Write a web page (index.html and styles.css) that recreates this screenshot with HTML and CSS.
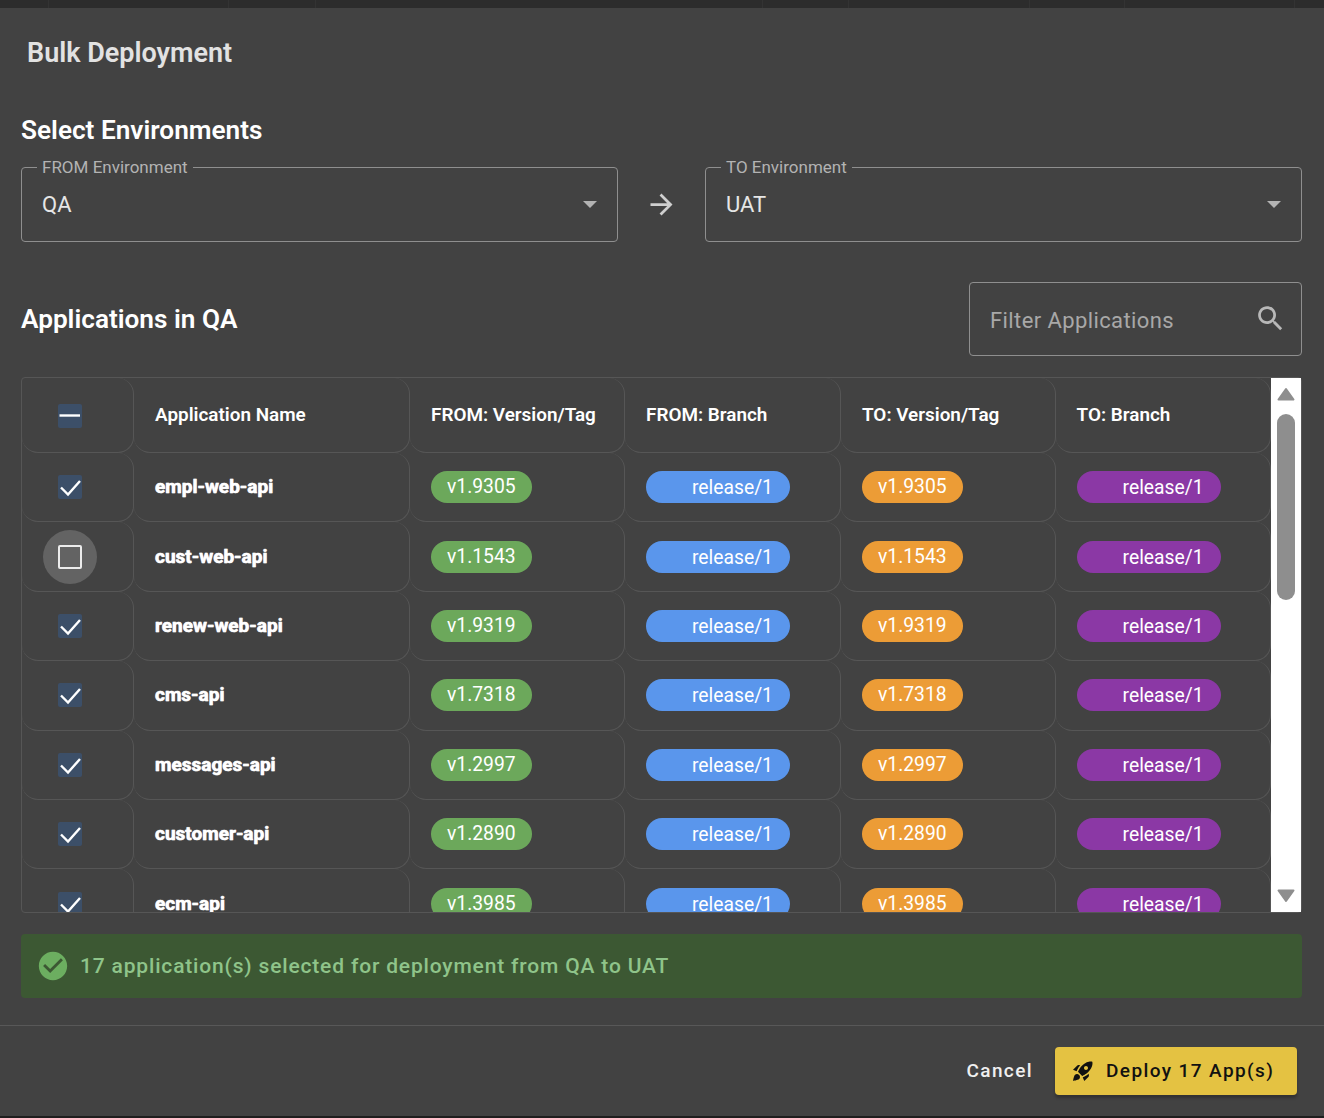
FILE: index.html
```html
<!DOCTYPE html>
<html lang="en">
<head>
  <meta charset="UTF-8">
  <meta name="viewport" content="width=device-width, initial-scale=1.0">
  <title>Bulk Deployment</title>
  <link rel="stylesheet" href="styles.css">
</head>
<body>

  <div class="backdrop-top"></div>

  <div class="dialog">
    <h2 class="dialog-title">Bulk Deployment</h2>

    <div class="dialog-body">
      <h3 class="section-title">Select Environments</h3>

      <div class="env-row">
        <div class="field">
          <span class="field-label">FROM Environment</span>
          <span class="field-value">QA</span>
          <span class="caret"></span>
        </div>
        <svg class="env-arrow" viewBox="0 0 24 24"><path d="M12 4l-1.41 1.41L16.17 11H4v2h12.17l-5.58 5.59L12 20l8-8z"/></svg>
        <div class="field">
          <span class="field-label">TO Environment</span>
          <span class="field-value">UAT</span>
          <span class="caret"></span>
        </div>
      </div>

      <div class="apps-head">
        <h3 class="section-title">Applications in QA</h3>
        <div class="filter">
          <span class="filter-text">Filter Applications</span>
          <svg class="filter-icon" viewBox="0 0 24 24"><path d="M15.5 14h-.79l-.28-.27C15.41 12.59 16 11.11 16 9.5 16 5.91 13.09 3 9.5 3S3 5.91 3 9.5 5.91 16 9.5 16c1.61 0 3.09-.59 4.23-1.57l.27.28v.79l5 4.99L20.49 19l-4.99-5zm-6 0C7.01 14 5 11.99 5 9.5S7.01 5 9.5 5 14 7.01 14 9.5 11.99 14 9.5 14z"/></svg>
        </div>
      </div>

      <div class="table-box">
        <div class="table-scroll">
          <table class="apps">
            <colgroup>
              <col class="col-check"><col class="col-name"><col class="col-a"><col class="col-b"><col class="col-c"><col class="col-d">
            </colgroup>
            <thead>
              <tr>
                <th class="check"><span class="box on"><svg viewBox="0 0 24 24"><path d="M1.5 11.5H22"/></svg></span></th>
                <th>Application Name</th>
                <th>FROM: Version/Tag</th>
                <th>FROM: Branch</th>
                <th>TO: Version/Tag</th>
                <th>TO: Branch</th>
              </tr>
            </thead>
            <tbody>
              <tr>
                <td class="check"><span class="box on"><svg viewBox="0 0 24 24"><path d="M3 12.5l7 7L22 6"/></svg></span></td>
                <td class="name">empl-web-api</td>
                <td><span class="chip green">v1.9305</span></td>
                <td><span class="chip branch blue">release/1</span></td>
                <td><span class="chip orange">v1.9305</span></td>
                <td><span class="chip branch purple">release/1</span></td>
              </tr>
              <tr>
                <td class="check"><span class="hover-ring"><span class="box"></span></span></td>
                <td class="name">cust-web-api</td>
                <td><span class="chip green">v1.1543</span></td>
                <td><span class="chip branch blue">release/1</span></td>
                <td><span class="chip orange">v1.1543</span></td>
                <td><span class="chip branch purple">release/1</span></td>
              </tr>
              <tr>
                <td class="check"><span class="box on"><svg viewBox="0 0 24 24"><path d="M3 12.5l7 7L22 6"/></svg></span></td>
                <td class="name">renew-web-api</td>
                <td><span class="chip green">v1.9319</span></td>
                <td><span class="chip branch blue">release/1</span></td>
                <td><span class="chip orange">v1.9319</span></td>
                <td><span class="chip branch purple">release/1</span></td>
              </tr>
              <tr>
                <td class="check"><span class="box on"><svg viewBox="0 0 24 24"><path d="M3 12.5l7 7L22 6"/></svg></span></td>
                <td class="name">cms-api</td>
                <td><span class="chip green">v1.7318</span></td>
                <td><span class="chip branch blue">release/1</span></td>
                <td><span class="chip orange">v1.7318</span></td>
                <td><span class="chip branch purple">release/1</span></td>
              </tr>
              <tr>
                <td class="check"><span class="box on"><svg viewBox="0 0 24 24"><path d="M3 12.5l7 7L22 6"/></svg></span></td>
                <td class="name">messages-api</td>
                <td><span class="chip green">v1.2997</span></td>
                <td><span class="chip branch blue">release/1</span></td>
                <td><span class="chip orange">v1.2997</span></td>
                <td><span class="chip branch purple">release/1</span></td>
              </tr>
              <tr>
                <td class="check"><span class="box on"><svg viewBox="0 0 24 24"><path d="M3 12.5l7 7L22 6"/></svg></span></td>
                <td class="name">customer-api</td>
                <td><span class="chip green">v1.2890</span></td>
                <td><span class="chip branch blue">release/1</span></td>
                <td><span class="chip orange">v1.2890</span></td>
                <td><span class="chip branch purple">release/1</span></td>
              </tr>
              <tr>
                <td class="check"><span class="box on"><svg viewBox="0 0 24 24"><path d="M3 12.5l7 7L22 6"/></svg></span></td>
                <td class="name">ecm-api</td>
                <td><span class="chip green">v1.3985</span></td>
                <td><span class="chip branch blue">release/1</span></td>
                <td><span class="chip orange">v1.3985</span></td>
                <td><span class="chip branch purple">release/1</span></td>
              </tr>
            </tbody>
          </table>
        </div>
        <div class="scrollbar">
          <svg class="sb-arrow" viewBox="0 0 18 14"><path d="M9 2L16.5 12.5H1.5z"/></svg>
          <span class="sb-thumb"></span>
          <svg class="sb-arrow down" viewBox="0 0 18 14"><path d="M1.5 1.5H16.5L9 12z"/></svg>
        </div>
      </div>

      <div class="alert">
        <svg class="alert-icon" viewBox="0 0 24 24"><path d="M12 2C6.48 2 2 6.48 2 12s4.48 10 10 10 10-4.48 10-10S17.52 2 12 2zm-2 15l-5-5 1.41-1.41L10 14.17l7.59-7.59L19 8l-9 9z"/></svg>
        <span>17 application(s) selected for deployment from QA to UAT</span>
      </div>
    </div>

    <div class="dialog-actions">
      <button class="btn-cancel" type="button">Cancel</button>
      <button class="btn-deploy" type="button">
        <svg viewBox="0 0 24 24"><path d="M9.19 6.35c-2.04 2.29-3.44 5.58-3.57 5.89L2 10.69l4.05-4.05c.47-.47 1.15-.68 1.81-.55l1.33.26zM11.17 17s3.74-1.55 5.89-3.7c5.4-5.4 4.5-9.62 4.21-10.57-.95-.3-5.17-1.19-10.57 4.21C8.55 9.09 7 12.83 7 12.83L11.17 17zm6.48-2.19c-2.29 2.04-5.58 3.44-5.89 3.57L13.31 22l4.05-4.05c.47-.47.68-1.15.55-1.81l-.26-1.33zM9 18c0 .83-.34 1.58-.88 2.12C6.94 21.3 2 22 2 22s.7-4.94 1.88-6.12C4.42 15.34 5.17 15 6 15c1.66 0 3 1.34 3 3zm4-9c0-1.1.9-2 2-2s2 .9 2 2-.9 2-2 2-2-.9-2-2z"/></svg>
        <span>Deploy 17 App(s)</span>
      </button>
    </div>
  </div>

  <div class="backdrop-bottom">
    <span class="date-a">2025 8:00 PM</span>
    <span class="date-b">8-18-2025 8:00 PM</span>
    <span class="date-b">8-18-2025 8:00 PM</span>
    <span class="date-b">8-18-2025 8:00 PM</span>
  </div>

</body>
</html>
```

FILE: styles.css
```css
* {
  box-sizing: border-box;
}
html, body {
  margin: 0;
  height: 1118px;
  overflow: hidden;
}
body {
  background-color: #1e1e1e;
  font-family: Roboto, "Liberation Sans", sans-serif;
  display: flex;
  flex-direction: column;
}
.backdrop-top {
  height: 8px;
  flex: none;
  background-color: #2c2c2c;
  /* column lines of the page behind the dialog */
  background-image:
    linear-gradient(#333, #333), linear-gradient(#333, #333),
    linear-gradient(#333, #333), linear-gradient(#333, #333),
    linear-gradient(#333, #333), linear-gradient(#333, #333),
    linear-gradient(#333, #333), linear-gradient(#333, #333);
  background-size: 1px 100%;
  background-repeat: no-repeat;
  background-position: 48px 0, 228px 0, 315px 0, 762px 0, 848px 0, 1029px 0, 1124px 0, 1294px 0;
}
.backdrop-bottom {
  height: 2px;
  flex: none;
  overflow: hidden;
  display: flex;
  padding-left: 8px;
  background-color: #1e1e1e;
  color: #9a9a9a;
  font-size: 17px;
  line-height: 18px;
}
.date-a { width: 222px; }
.date-b { width: 267px; }
.dialog {
  height: 1108px;
  flex: none;
  background-color: #424242;
  color: #fff;
  display: flex;
  flex-direction: column;
}
.dialog-title {
  margin: 0;
  padding: 28px 27px 0;
  height: 104px;
  font-size: 27px;
  line-height: 35px;
  font-weight: 600;
  color: #e2e2e2;
}
.dialog-body {
  flex: 1;
  padding: 0 22px 0 21px;
  border-bottom: 1px solid #585858;
}
.section-title {
  margin: 0;
  font-size: 26.2px;
  line-height: 36px;
  font-weight: 600;
}
.env-row {
  display: flex;
  align-items: center;
  margin-top: 19px;
}
.field {
  position: relative;
  flex: 1;
  height: 75px;
  border: 1px solid #8f8f8f;
  border-radius: 4px;
  padding: 0 20px 1px;
  display: flex;
  align-items: center;
}
.field-label {
  position: absolute;
  top: -11px;
  left: 15px;
  padding: 0 5px;
  background-color: #424242;
  color: #b3b3b3;
  font-size: 17px;
  line-height: 20px;
}
.field-value {
  font-size: 22px;
  color: #e6e6e6;
}
.caret {
  margin-left: auto;
  border-left: 7px solid transparent;
  border-right: 7px solid transparent;
  border-top: 7px solid #b3b3b3;
}
.env-arrow {
  width: 33px;
  height: 33px;
  flex: none;
  margin: 0 27px;
  fill: #cfcfcf;
}
.apps-head {
  display: flex;
  align-items: center;
  justify-content: space-between;
  margin-top: 40px;
}
.filter {
  width: 333px;
  height: 74px;
  border: 1px solid #8f8f8f;
  border-radius: 4px;
  padding: 0 14px 0 20px;
  display: flex;
  align-items: center;
  justify-content: space-between;
}
.filter-text {
  padding-top: 2px;
  font-size: 22px;
  letter-spacing: 0.4px;
  color: #a8a8a8;
}
.filter-icon {
  width: 33px;
  height: 33px;
  margin-top: -1px;
  fill: #b8b8b8;
}
.table-box {
  display: flex;
  height: 536px;
  margin-top: 21px;
  border: 1px solid #565656;
  border-radius: 4px;
}
.table-scroll {
  flex: 1;
  overflow: hidden;
}
.apps {
  width: 1249px;
  table-layout: fixed;
  border-collapse: separate;
  border-spacing: 0;
}
.col-check { width: 112px; }
.col-name { width: 276px; }
.col-a { width: 215px; }
.col-b { width: 216px; }
.col-c { width: 214.6px; }
.col-d { width: 215.4px; }
.apps th, .apps td {
  height: 69.4px;
  padding: 0 21px;
  text-align: left;
  border-right: 1px solid #565656;
  border-bottom: 1px solid #565656;
  border-radius: 16px;
}
.apps th {
  height: 75px;
  padding-bottom: 2px;
  font-size: 18.9px;
  font-weight: 600;
}
.apps th.check, .apps td.check {
  padding: 0 16px 0 0;
  text-align: center;
}
.apps td.name {
  padding-bottom: 1px;
  font-size: 19px;
  font-weight: 700;
  text-shadow: 0 0 1px #fff;
  -webkit-text-stroke: 0.4px #fff;
}
.box {
  display: inline-flex;
  vertical-align: middle;
  width: 24px;
  height: 24px;
  border: 2px solid #ececec;
  border-radius: 2px;
}
.box.on {
  border: none;
  background-color: #3c4f68;
}
.box svg {
  width: 24px;
  height: 24px;
  fill: none;
  stroke: #fff;
  stroke-width: 2.4;
}
.hover-ring {
  display: inline-flex;
  align-items: center;
  justify-content: center;
  vertical-align: middle;
  width: 54px;
  height: 54px;
  border-radius: 50%;
  background-color: #636363;
}
.chip {
  display: inline-block;
  height: 32px;
  line-height: 31px;
  border-radius: 16px;
  padding: 0 16px;
  font-size: 19.3px;
  color: #fff;
}
.chip.branch {
  line-height: 33px;
  padding-left: 46px;
  padding-right: 17px;
}
.green { background-color: #6ca85b; }
.blue { background-color: #5a96ec; }
.orange { background-color: #ec9c36; }
.purple { background-color: #8b38a5; }
.scrollbar {
  width: 30px;
  flex: none;
  background-color: #fff;
  display: flex;
  flex-direction: column;
  align-items: center;
  padding: 9px 0 9px;
}
.sb-thumb {
  width: 18px;
  height: 186px;
  flex: none;
  margin-top: 13px;
  border-radius: 9px;
  background-color: #8e8e8e;
}
.sb-arrow {
  width: 18px;
  height: 14px;
  flex: none;
  fill: #8e8e8e;
  stroke: #8e8e8e;
  stroke-width: 2;
  stroke-linejoin: round;
}
.sb-arrow.down {
  margin-top: auto;
}
.alert {
  display: flex;
  align-items: center;
  gap: 10px;
  height: 64px;
  margin-top: 21px;
  padding: 0 15px;
  border-radius: 4px;
  background-color: #3c5833;
  color: #8fc48a;
  font-size: 21px;
  font-weight: 500;
  letter-spacing: 0.83px;
}
.alert-icon {
  width: 34px;
  height: 34px;
  fill: #6cae60;
}
.dialog-actions {
  height: 90px;
  flex: none;
  display: flex;
  align-items: center;
  justify-content: flex-end;
  gap: 22px;
  padding: 0 27px 0 0;
}
.btn-cancel, .btn-deploy {
  font-family: inherit;
  font-size: 19px;
  font-weight: 500;
  letter-spacing: 1.4px;
  border: none;
  border-radius: 4px;
  cursor: pointer;
}
.btn-cancel {
  background: none;
  color: #f0f0f0;
  padding: 0 0 2px;
}
.btn-deploy {
  display: flex;
  align-items: center;
  gap: 11px;
  width: 242px;
  height: 48px;
  padding: 0 16px;
  color: #111;
  background-color: #e4c242;
  box-shadow: 0 3px 3px rgba(0, 0, 0, 0.25);
}
.btn-deploy span {
  margin-top: -2px;
}
.btn-deploy svg {
  width: 24px;
  height: 24px;
  fill: #111;
}
```
